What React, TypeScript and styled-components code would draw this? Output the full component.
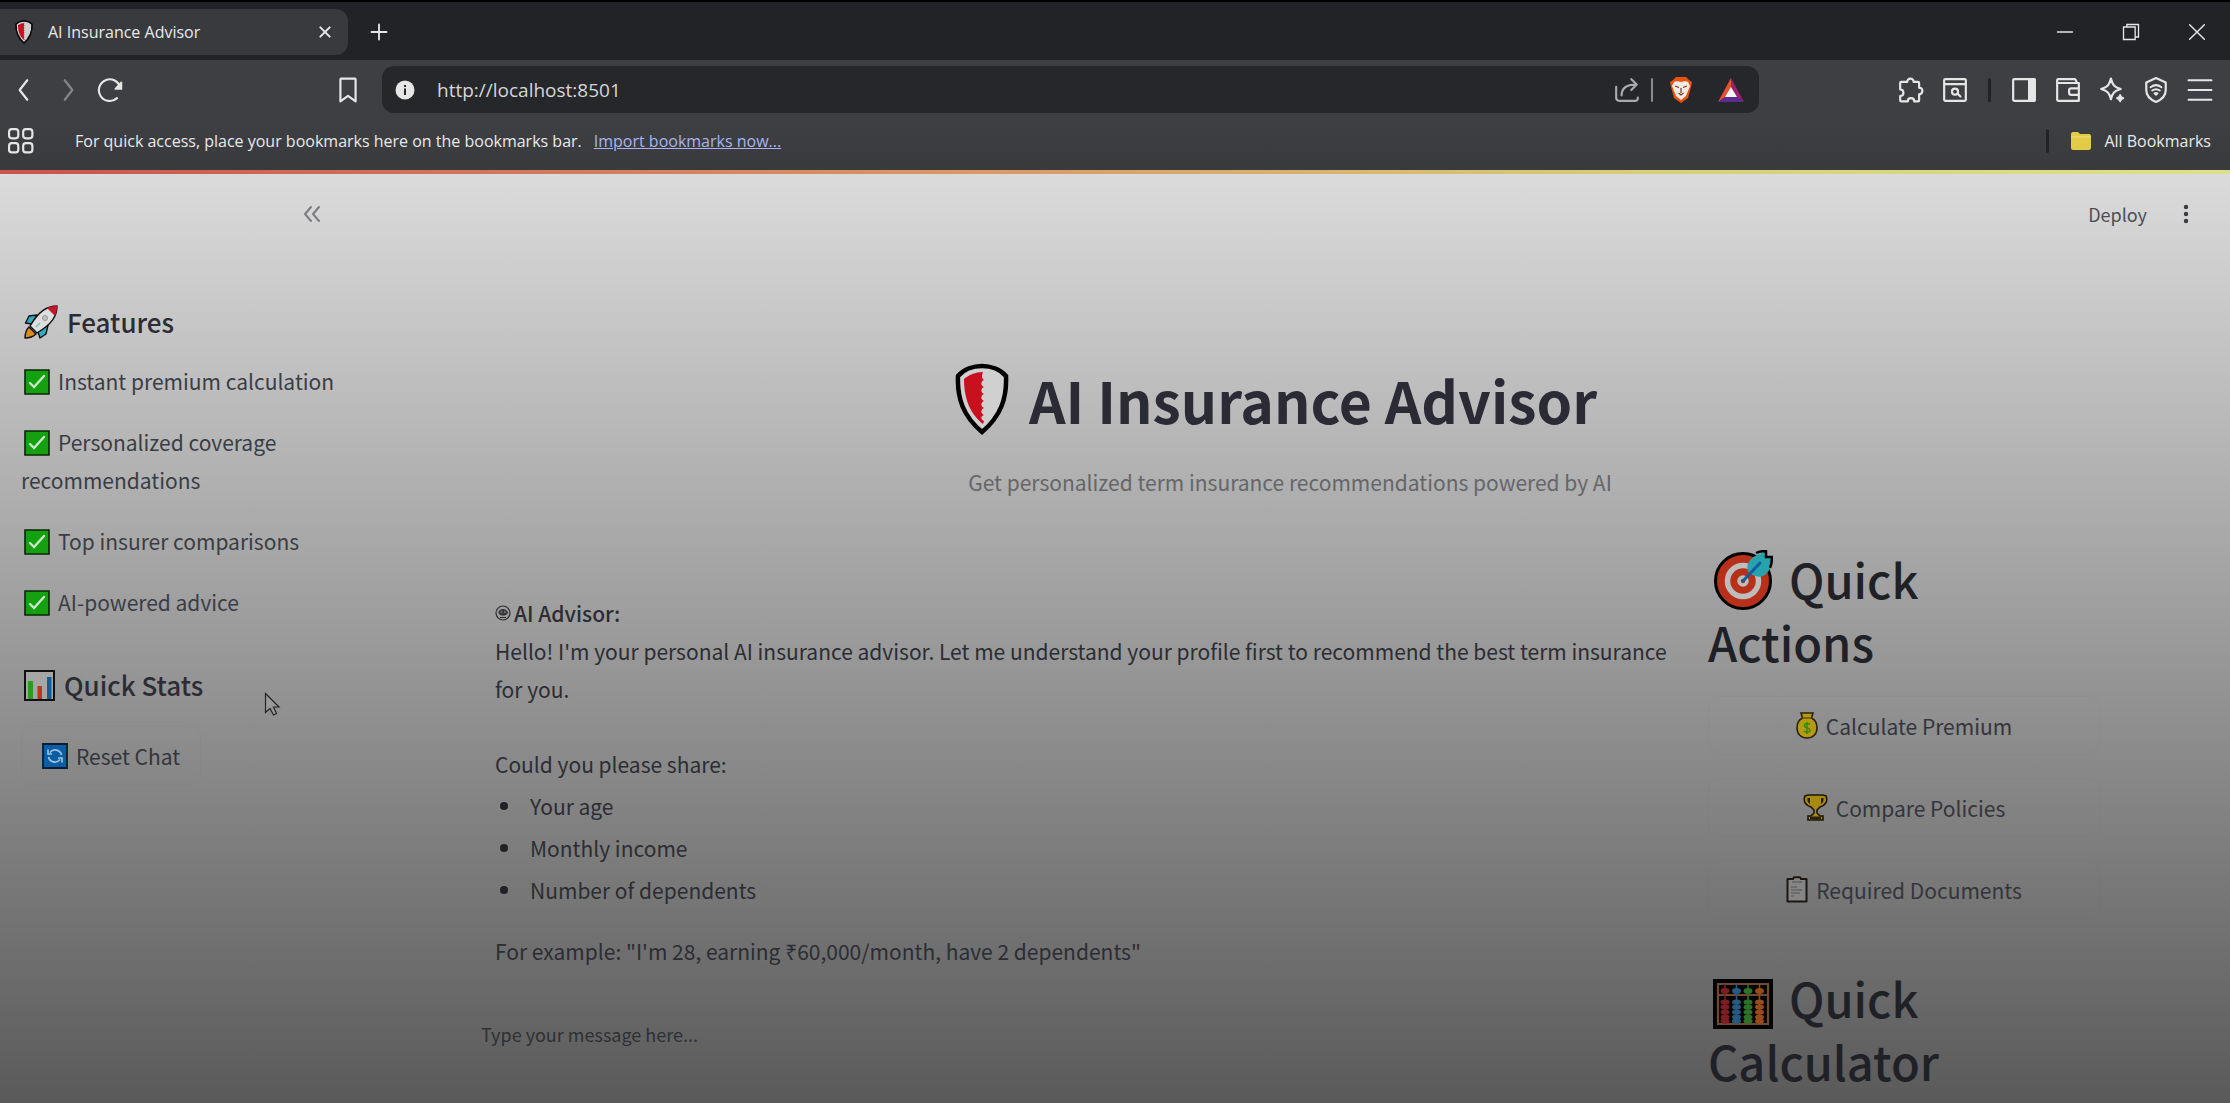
import React from 'react';
import styled, { createGlobalStyle } from 'styled-components';

const UI_FONT = "'Open Sans', 'Noto Sans', sans-serif";
const PAGE_FONT = "'Noto Sans CJK SC', 'Noto Sans', sans-serif";

const GlobalStyle = createGlobalStyle`
  *, *::before, *::after { box-sizing: border-box; }
  body { margin: 0; background: #222327; overflow: hidden; }
  button, input { font: inherit; color: inherit; }
  button { margin: 0; padding: 0; border: 0; background: none; }
  p, h1, h2, h3, ul { margin: 0; padding: 0; }
`;

const Shell = styled.div`
  display: flex;
  flex-direction: column;
  min-height: 100vh;
`;

/* ---------- browser chrome ---------- */

const TabStrip = styled.header`
  display: flex;
  align-items: center;
  height: 60px;
  padding-top: 2px;
  border-top: 2px solid #000;
  background: #222327;
  color: #e9e9ea;
  font-family: ${UI_FONT};
`;

const Tab = styled.div`
  display: flex;
  align-items: center;
  width: 348px;
  height: 46px;
  padding: 0 12px;
  border-radius: 0 12px 12px 0;
  background: #393a3e;
  font-size: 16px;
`;

const TabTitle = styled.span`
  flex: 1;
  padding-left: 12px;
`;

const IconButton = styled.button<{ $w?: number }>`
  display: flex;
  align-items: center;
  justify-content: center;
  width: ${(p) => p.$w ?? 44}px;
  height: 44px;
  color: #e6e6e7;
`;

const WindowControls = styled.div`
  display: flex;
  margin-left: auto;
`;

const Toolbar = styled.nav`
  display: grid;
  grid-template-columns: 382px 1fr 471px;
  align-items: center;
  height: 59px;
  background: #3e3f43;
  font-family: ${UI_FONT};
`;

const ToolGroup = styled.div<{ $end?: boolean }>`
  display: flex;
  align-items: center;
  justify-content: ${(p) => (p.$end ? 'flex-end' : 'flex-start')};
  padding-right: ${(p) => (p.$end ? 8 : 12)}px;

  > :last-child { margin-left: ${(p) => (p.$end ? '0' : 'auto')}; }
`;

const Rule = styled.span<{ $light?: boolean }>`
  width: ${(p) => (p.$light ? 2 : 3)}px;
  height: 24px;
  margin: ${(p) => (p.$light ? '0 6px 0 11px' : '0 11px')};
  border-radius: 2px;
  background: ${(p) => (p.$light ? '#8b8c8e' : '#222327')};
`;

const AddressBar = styled.label`
  display: flex;
  align-items: center;
  height: 47px;
  border-radius: 12px;
  background: #26272b;
  color: #d5d6d8;
`;

const AddressInput = styled.input`
  flex: 1;
  min-width: 0;
  margin-left: 9px;
  padding: 0;
  border: 0;
  outline: 0;
  background: transparent;
  font-size: 19px;
`;

const BookmarksBar = styled.nav`
  display: flex;
  align-items: center;
  height: 51px;
  padding: 0 19px 8px 0;
  background: linear-gradient(#3e3f43, #393a3c);
  color: #e9e9ea;
  font-family: ${UI_FONT};
  font-size: 16px;
`;

const BookmarkHint = styled.p`
  margin-left: 33px;
`;

const ImportLink = styled.a`
  margin-left: 12px;
  color: #a9b4ee;
`;

const AllBookmarks = styled.button`
  display: flex;
  align-items: center;
  gap: 12px;
  margin-left: 10px;
`;

const BarEnd = styled.div`
  display: flex;
  align-items: center;
  margin-left: auto;
`;

/* ---------- page ---------- */

const AccentLine = styled.div`
  height: 4px;
  background: linear-gradient(90deg, #c9544f, #d99a68 45%, #d6cf7a 75%, #dde08c);
`;

const Page = styled.div`
  display: flex;
  flex: 1;
  background: linear-gradient(#dbdbdb, #5a5a5a);
  color: #2c2d33;
  font-family: ${PAGE_FONT};
  font-size: 21px;
  line-height: 38px;
`;

const Sidebar = styled.aside`
  flex: 0 0 350px;
  padding: 0 12px 0 21px;
  color: #3b3d45;
`;

const HeaderRow = styled.div`
  display: flex;
  align-items: center;
  justify-content: flex-end;
  height: 80px;
`;

const Collapse = styled(IconButton)`
  margin-right: 4px;
  color: #7b7c80;
`;

const SideHeading = styled.h3`
  display: flex;
  align-items: center;
  gap: 9px;
  height: 38px;
  margin-left: 3px;
  color: #2b2c34;
  font-size: 26px;
  font-weight: 500;
`;

const SideBlock = styled.section<{ $top: number }>`
  margin-top: ${(p) => p.$top}px;
`;

const FeatureList = styled.ul`
  display: flex;
  flex-direction: column;
  gap: 23px;
  margin-top: 21px;
  list-style: none;

  svg {
    margin: 0 8px 0 3px;
    vertical-align: -5px;
  }
`;

const ActionButton = styled.button`
  display: flex;
  align-items: center;
  justify-content: center;
  gap: 8px;
  height: 59px;
  padding: 0 20px;
  border: 1px solid rgba(0, 0, 0, 0.02);
  border-radius: 11px;
  color: #34353c;
`;

const Main = styled.main`
  flex: 1;
  min-width: 0;
`;

const DeployRow = styled(HeaderRow)`
  gap: 17px;
  padding-right: 22px;
  color: #4d4e54;
  font-size: 18px;
`;

const Hero = styled.section`
  display: flex;
  flex-direction: column;
  align-items: center;
  margin-top: 109px;
`;

const Title = styled.h1`
  display: flex;
  align-items: center;
  gap: 20px;
  padding-right: 28px;
  color: #2b2b36;
  font-size: 57px;
  font-weight: 700;
  line-height: 70px;
`;

const Subtitle = styled.p`
  margin-top: 28px;
  color: #65666a;
`;

const Columns = styled.div`
  display: grid;
  grid-template-columns: minmax(0, 1fr) 392px;
  gap: 36px;
  margin-top: 46px;
  padding: 0 130px;
`;

const Chat = styled.section`
  padding-top: 47px;
`;

const Message = styled.article`
  padding-left: 15px;
`;

const Speaker = styled.p`
  display: flex;
  align-items: center;
  gap: 3px;
  font-weight: 500;
`;

const Paragraph = styled.p<{ $top?: number }>`
  margin-top: ${(p) => p.$top ?? 0}px;
`;

const AskList = styled.ul`
  list-style: none;
`;

const AskItem = styled.li`
  display: flex;
  align-items: center;
  gap: 22px;
  margin-top: 4px;
  padding-left: 5px;

  &::before {
    content: '';
    width: 8px;
    height: 8px;
    border-radius: 50%;
    background: #222226;
  }
`;

const ChatInput = styled.input`
  display: block;
  width: 100%;
  height: 46px;
  margin-top: 41px;
  padding: 0 1px;
  border: 0;
  outline: 0;
  background: transparent;
  font-size: 18px;

  &::placeholder { color: #2f3034; opacity: 1; }
`;

const Actions = styled.section`
  display: flex;
  flex-direction: column;
`;

const PanelHeading = styled.h2<{ $top?: number }>`
  margin-top: ${(p) => p.$top ?? 0}px;
  color: #202127;
  font-size: 47px;
  font-weight: 500;
  line-height: 63px;

  svg {
    margin: 0 16px 0 5px;
    vertical-align: -11px;
  }
`;

const PanelButtons = styled.div`
  display: flex;
  flex-direction: column;
  gap: 23px;
  margin-top: 23px;
`;

const Pointer = styled.svg`
  position: absolute;
  left: 264px;
  top: 692px;
`;

/* ---------- icons ---------- */

type IconProps = { size?: number; children: React.ReactNode };
const Line = ({ size = 26, children }: IconProps) => (
  <svg width={size} height={size} viewBox="0 0 24 24" fill="none" stroke="currentColor" strokeWidth="1.6" strokeLinecap="round" strokeLinejoin="round" aria-hidden="true">
    {children}
  </svg>
);

const ShieldLogo = ({ w, h }: { w: number; h: number }) => (
  <svg width={w} height={h} viewBox="0 0 54 72" aria-hidden="true">
    <path d="M27 3C19 3 9 6 3 13c-1 22 5 40 24 56 19-16 25-34 24-56C45 6 35 3 27 3Z" fill="#d0d0d0" stroke="#000" strokeWidth="4.5" />
    <path d="M28 9C20 9 14 12 9 16c0 16 4 33 19 45l1-3c-4-2-3-5 0-6-4-2-3-6 0-7-4-2-3-6 0-7-4-2-3-6 0-7-4-2-3-6 0-7-4-2-3-6 0-7-3-2-2-5-1-8Z" fill="#c8101f" />
  </svg>
);

const Rocket = () => (
  <svg width="34" height="34" viewBox="0 0 34 34" stroke="#111" strokeWidth="1.4" strokeLinejoin="round" aria-hidden="true">
    <path d="M13 10 5 11 1.500 18l6 1ZM24 20l-2 9-6 4-2-6Z" fill="#35a9c4" />
    <path d="M5 22c-3 3-4 7-4 11 5 0 8-1 11-4Z" fill="#d88a22" />
    <path d="M33 1C23 1 15 6 6 21l7 7C28 19 33 11 33 1Z" fill="#dedede" />
    <path d="M33 1c-4 0-7 .6-10 2l8 8c1.400-3 2-6 2-10Z" fill="#c5162a" stroke="none" />
    <circle cx="21" cy="13" r="2.500" fill="#c2c2c2" stroke="#999" strokeWidth="1" />
    <path d="m12 22 4-4" stroke="#6cc" />
  </svg>
);

const Check = () => (
  <svg width="26" height="26" viewBox="0 0 26 26" aria-hidden="true">
    <path d="M1 1h24v24H1Z" fill="#14a00f" stroke="#0a2408" strokeWidth="1.600" />
    <path d="m6 14 4 4L20 7" fill="none" stroke="#c9e6c6" strokeWidth="2.400" strokeLinecap="round" />
  </svg>
);

const Bars = () => (
  <svg width="31" height="31" viewBox="0 0 31 31" aria-hidden="true">
    <path d="M1 1h29v29H1Z" fill="#a6a6a6" stroke="#111" strokeWidth="2" />
    <path d="M4 11h5v18H4Z" fill="#2d9a22" />
    <path d="M13.500 16h4.500v13h-4.500Z" fill="#b03c18" />
    <path d="M23 7h4.500v22H23Z" fill="#0f5f9f" />
  </svg>
);

const Refresh = () => (
  <svg width="26" height="26" viewBox="0 0 26 26" fill="none" aria-hidden="true">
    <path d="M1 1h24v24H1Z" fill="#0c5da3" stroke="#081d30" strokeWidth="1.800" />
    <path d="M8 9.500A6.500 6.500 0 0 1 19.500 12M18 16.500A6.500 6.500 0 0 1 6.500 14M6 6.500v4.500h4M20 19.500V15h-4" stroke="#9fc3dd" strokeWidth="1.700" />
  </svg>
);

const Robot = () => (
  <svg width="16" height="16" viewBox="0 0 16 16" fill="none" stroke="#2b2c30" aria-hidden="true">
    <circle cx="8" cy="8" r="7" strokeWidth="1.200" />
    <path d="M4 6.500C5 4 11 4 12 6.500S11 10 8 10 3.500 9 4 6.500Z" fill="#3a3b40" />
    <path d="M5.500 7h1.500M9 7h1.500" stroke="#aaa" />
    <path d="M5 12.500h6" />
  </svg>
);

const Target = () => (
  <svg width="60" height="60" viewBox="0 0 60 60" aria-hidden="true">
    <circle cx="30" cy="31" r="27.500" fill="#b7311a" stroke="#000" strokeWidth="3" />
    <circle cx="30" cy="31" r="15.500" fill="none" stroke="#bdbdbd" strokeWidth="5.500" />
    <circle cx="30" cy="31" r="4" fill="#b7311a" stroke="#bdbdbd" strokeWidth="3.500" />
    <path d="M36 23c-5-9 3-17 11-19l6-3v6h6l-1 7c-1 9-9 16-18 11Z" fill="#27a3ad" />
    <path d="M43 3q4-2 10-2v6h6q0 6-2 11" fill="none" stroke="#000" strokeWidth="2.500" />
    <path d="M30 31 47 13" stroke="#155c9e" strokeWidth="3" strokeLinecap="round" />
  </svg>
);

const MoneyBag = () => (
  <svg width="22" height="27" viewBox="0 0 22 27" aria-hidden="true">
    <path d="M5 1h12l-1.500 5C20 8 21 13 21 16c0 6-4 10-10 10S1 22 1 16c0-3 1-8 5.500-10Z" fill="#b79a12" stroke="#2a2208" strokeWidth="1.600" />
    <path d="M6 6h10" stroke="#5c4b0a" strokeWidth="1.300" />
    <path d="M14 12.500c-2-2-6-1-5.500 1.500s5.500 1.500 5.500 4-4 3-6 1M11 10v12" fill="none" stroke="#2f8c14" strokeWidth="1.500" />
  </svg>
);

const Trophy = () => (
  <svg width="25" height="27" viewBox="0 0 25 27" aria-hidden="true">
    <path d="M5 1h15l3 1c2 5 0 9-6 11l-3 3v3l3 3h3v4H5v-4h3l3-3v-3l-3-3C2 11 0 7 2 2Z" fill="#a98a10" stroke="#1d1708" strokeWidth="1.600" />
    <path d="M4.500 4c-.5 3 .5 5 2.500 6V4ZM20.500 4c.5 3-.5 5-2.500 6V4Z" fill="#2a2208" />
    <path d="M7 24h11" stroke="#2a2208" strokeWidth="3" />
  </svg>
);

const Clipboard = () => (
  <svg width="22" height="27" viewBox="0 0 22 27" aria-hidden="true">
    <path d="M1.500 3H7l1-1.800h6L15 3h5.500v22.500h-19Z" fill="#858585" stroke="#1d1714" strokeWidth="2" strokeLinejoin="round" />
    <path d="M6 6h10M5 11h6M5 14h11M5 17h9M5 20h3" stroke="#555" strokeWidth="1.200" />
  </svg>
);

const BEADS = ['#7d1e22', '#275a80', '#2c7327', '#9a4b18'];
const Abacus = () => (
  <svg width="60" height="50" viewBox="0 0 60 50" aria-hidden="true">
    <path d="M0 0h60v50H0Z" fill="#050404" />
    <path d="M5 5h50v40H5ZM5 16h50" fill="none" stroke="#6e4a32" strokeWidth="2.200" />
    {BEADS.map((fill, i) => {
      const x = 12 + i * 11.5;
      return (
        <g key={fill} fill={fill}>
          <path d={`M${x} 5v40`} stroke={fill} strokeWidth="1.500" />
          <ellipse cx={x} cy="12" rx="4.500" ry="3" />
          {[23, 28, 33, 38, 42].map((y) => <ellipse key={y} cx={x} cy={y} rx="4.500" ry="2.600" />)}
        </g>
      );
    })}
  </svg>
);

const BraveLion = () => (
  <svg width="24" height="28" viewBox="0 0 24 28" aria-hidden="true">
    <path d="m7 1-3 3-3 2 1 5 3 11 7 5 7-5 3-11 1-5-3-2-3-3Z" fill="#e8520f" />
    <path d="m8 5-3 1-2 4 2 5 2 5 5 4 5-4 2-5 2-5-2-4-3-1-4 1Z" fill="#f1e9e2" />
    <path d="m6 10 4 1.500M18 10l-4 1.500M12 12v5M9.500 17l2.500 2 2.500-2" fill="none" stroke="#6b3a24" strokeWidth="1.200" />
  </svg>
);

const BatTriangle = () => (
  <svg width="26" height="24" viewBox="0 0 26 24" aria-hidden="true">
    <path d="M13 0 0 24 13 15Z" fill="#e8502f" />
    <path d="m13 0 13 24-13-9Z" fill="#99226f" />
    <path d="M0 24h26l-13-9Z" fill="#5b2d91" />
    <path d="m13 9 6 10H7Z" fill="#f4f4f4" />
  </svg>
);

const FEATURES = ['Instant premium calculation', 'Personalized coverage recommendations', 'Top insurer comparisons', 'AI-powered advice'];
const ASKS = ['Your age', 'Monthly income', 'Number of dependents'];
const ACTIONS = [
  { icon: <MoneyBag />, label: 'Calculate Premium' },
  { icon: <Trophy />, label: 'Compare Policies' },
  { icon: <Clipboard />, label: 'Required Documents' },
];

export default function App() {
  return (
    <Shell>
      <GlobalStyle />
      <TabStrip>
        <Tab>
          <ShieldLogo w={24} h={24} />
          <TabTitle>AI Insurance Advisor</TabTitle>
          <IconButton $w={22} aria-label="Close tab"><Line size={16}><path strokeWidth="3" d="m5 5 14 14M19 5 5 19" /></Line></IconButton>
        </Tab>
        <IconButton $w={62} aria-label="New tab"><Line size={20}><path strokeWidth="2.200" d="M12 3v18M3 12h18" /></Line></IconButton>
        <WindowControls>
          <IconButton $w={66} aria-label="Minimize"><Line size={20}><path d="M3 12h18" /></Line></IconButton>
          <IconButton $w={66} aria-label="Restore"><Line size={20}><path strokeLinejoin="miter" d="M3 6h14v15H3ZM7 6V3h14v15h-4" /></Line></IconButton>
          <IconButton $w={66} aria-label="Close"><Line size={22}><path d="m4 4 16 16M20 4 4 20" /></Line></IconButton>
        </WindowControls>
      </TabStrip>

      <Toolbar>
        <ToolGroup>
          <IconButton $w={48} aria-label="Back"><Line><path strokeWidth="2" d="m15 3-7 9 7 9" /></Line></IconButton>
          <IconButton $w={40} aria-label="Forward"><Line><path stroke="#85868a" strokeWidth="2" d="m9 3 7 9-7 9" /></Line></IconButton>
          <IconButton aria-label="Reload">
            <Line><path strokeWidth="2" d="M18.500 19.500A10 10 0 1 1 21.500 10" /><path d="M22.500 5v6H17Z" fill="currentColor" /></Line>
          </IconButton>
          <IconButton aria-label="Bookmark this page"><Line><path strokeWidth="2" d="M5.500 1.500h13q.500 0 .500 1V22.500l-7-5-7 5V2.500q0-1 .500-1Z" /></Line></IconButton>
        </ToolGroup>
        <AddressBar>
          <IconButton $w={46} aria-label="Site information">
            <svg width="20" height="20" viewBox="0 0 20 20" aria-hidden="true">
              <circle cx="10" cy="10" r="9.500" fill="#e6e6e7" />
              <path d="M10 8.500V15M10 5v2" stroke="#26272b" strokeWidth="2" />
            </svg>
          </IconButton>
          <AddressInput aria-label="Address" defaultValue="http://localhost:8501" />
          <IconButton $w={26} aria-label="Share">
            <Line><path stroke="#a9aaac" strokeWidth="2" d="M2 9v10q0 3 3 3h15q2 0 2-3M7 17C7 10 12 7 20 7M16 2l5 5-5 5" /></Line>
          </IconButton>
          <Rule $light />
          <IconButton aria-label="Brave Shields"><BraveLion /></IconButton>
          <IconButton $w={56} aria-label="Brave Rewards"><BatTriangle /></IconButton>
        </AddressBar>
        <ToolGroup $end>
          <IconButton aria-label="Extensions"><Line><path strokeWidth="2" d="M8.500 4.500a3 3 0 0 1 6 0h4q1 0 1 1v4.500c4-.5 4 5.500 0 6v5.500q0 1-1 1h-3.500c0-4-6-4-6 0H3q-1 0-1-1v-4c4 0 4-6 0-6V5.500q0-1 1-1Z" /></Line></IconButton>
          <IconButton aria-label="Search tabs"><Line><path strokeWidth="2" d="M3 2h18q1 0 1 1v18q0 1-1 1H3q-1 0-1-1V3q0-1 1-1ZM2 6.500h20" /><circle cx="12" cy="13.500" r="2.800" strokeWidth="2" /><path strokeWidth="2" d="m14.500 15.500 2.500 2.500" /></Line></IconButton>
          <Rule />
          <IconButton aria-label="Side panel"><Line><path strokeWidth="2" d="M3 2h18q1 0 1 1v18q0 1-1 1H3q-1 0-1-1V3q0-1 1-1Z" /><path fill="currentColor" d="M16.500 2H22v20h-5.500Z" /></Line></IconButton>
          <IconButton aria-label="Wallet"><Line><path strokeWidth="2" d="M3 2h15q1.500 0 2 3.500H22V22H3q-1 0-1-1V3q0-1 1-1ZM2 5.500h18M22 10.500h-7q-2 0-2 2v2q0 2 2 2h7" /></Line></IconButton>
          <IconButton aria-label="Leo AI"><Line><path strokeWidth="2" d="M11 1.500c1.500 6 3 7.500 9 9.500-6 2-7.500 3.500-9 9.500-1.500-6-3-7.500-9-9.500 6-2 7.500-3.500 9-9.500Z" /><path fill="currentColor" d="M19.500 16.500q.7 2.500 3 3-2.300.700-3 3-.7-2.300-3-3 2.300-.5 3-3Z" /></Line></IconButton>
          <IconButton aria-label="VPN"><Line><path strokeWidth="2" d="M12 1 21 5v7c0 6-4 9-9 11-5-2-9-5-9-11V5Z" /><path strokeWidth="1.800" d="M7 9.500q5-4 10 0M8.500 12.500q3.500-2.500 7 0" /><path fill="currentColor" d="m10.500 15.200 1.500 1.300 1.500-1.300q-1.500-1-3 0Z" /></Line></IconButton>
          <IconButton aria-label="Menu"><Line><path strokeWidth="2" d="M1.500 3h21M1.500 12h21M1.500 21h21" /></Line></IconButton>
        </ToolGroup>
      </Toolbar>

      <BookmarksBar>
        <IconButton $w={42} aria-label="Apps">
          <Line><g strokeWidth="2"><rect x="1" y="1" width="8.500" height="8.500" rx="2.500" /><rect x="14" y="1" width="8.500" height="8.500" rx="2.500" /><rect x="1" y="14" width="8.500" height="8.500" rx="2.500" /><rect x="14" y="14" width="8.500" height="8.500" rx="2.500" /></g></Line>
        </IconButton>
        <BookmarkHint>For quick access, place your bookmarks here on the bookmarks bar.</BookmarkHint>
        <ImportLink href="#import">Import bookmarks now...</ImportLink>
        <BarEnd>
          <Rule />
          <AllBookmarks>
            <svg width="22" height="20" viewBox="0 0 22 20" aria-hidden="true"><path d="M1 3q0-2 2-2h5l2 2h9q2 0 2 2v11q0 3-2 3H3q-2 0-2-2Z" fill="#e2cb45" /><path d="M1 6h20" stroke="#f0de72" /></svg>
            All Bookmarks
          </AllBookmarks>
        </BarEnd>
      </BookmarksBar>

      <AccentLine />
      <Page>
        <Sidebar>
          <HeaderRow>
            <Collapse aria-label="Collapse sidebar"><Line size={24}><path strokeWidth="2" d="m11 5-6 7 6 7M19 5l-6 7 6 7" /></Line></Collapse>
          </HeaderRow>
          <SideBlock $top={49}>
            <SideHeading><Rocket />Features</SideHeading>
            <FeatureList>
              {FEATURES.map((f) => <li key={f}><Check />{f}</li>)}
            </FeatureList>
          </SideBlock>
          <SideBlock $top={45}>
            <SideHeading><Bars />Quick Stats</SideHeading>
          </SideBlock>
          <SideBlock $top={22}>
            <ActionButton><Refresh />Reset Chat</ActionButton>
          </SideBlock>
        </Sidebar>

        <Main>
          <DeployRow>
            <button>Deploy</button>
            <IconButton aria-label="More options"><svg width="6" height="22" viewBox="0 0 6 22" fill="#3b3c42" aria-hidden="true"><circle cx="3" cy="4" r="2.200" /><circle cx="3" cy="11" r="2.200" /><circle cx="3" cy="18" r="2.200" /></svg></IconButton>
          </DeployRow>
          <Hero>
            <Title><ShieldLogo w={54} h={72} />AI Insurance Advisor</Title>
            <Subtitle>Get personalized term insurance recommendations powered by AI</Subtitle>
          </Hero>
          <Columns>
            <Chat>
              <Message>
                <Speaker><Robot />AI Advisor:</Speaker>
                <Paragraph>Hello! I'm your personal AI insurance advisor. Let me understand your profile first to recommend the best term insurance for you.</Paragraph>
                <Paragraph $top={37}>Could you please share:</Paragraph>
                <AskList>{ASKS.map((a) => <AskItem key={a}>{a}</AskItem>)}</AskList>
                <Paragraph $top={23}>For example: "I'm 28, earning ₹60,000/month, have 2 dependents"</Paragraph>
              </Message>
              <ChatInput aria-label="Message" placeholder="Type your message here..." />
            </Chat>
            <Actions>
              <PanelHeading><Target />Quick<br />Actions</PanelHeading>
              <PanelButtons>
                {ACTIONS.map((a) => <ActionButton key={a.label}>{a.icon}{a.label}</ActionButton>)}
              </PanelButtons>
              <PanelHeading $top={47}><Abacus />Quick<br />Calculator</PanelHeading>
            </Actions>
          </Columns>
        </Main>
      </Page>
      <Pointer width="17" height="24" viewBox="0 0 17 24" aria-hidden="true">
        <path d="M1.500 1.500v19l4.500-4 3.500 6.500 3-1.500-3-6.500H15Z" fill="#999" stroke="#222" strokeWidth="1.200" />
      </Pointer>
    </Shell>
  );
}
